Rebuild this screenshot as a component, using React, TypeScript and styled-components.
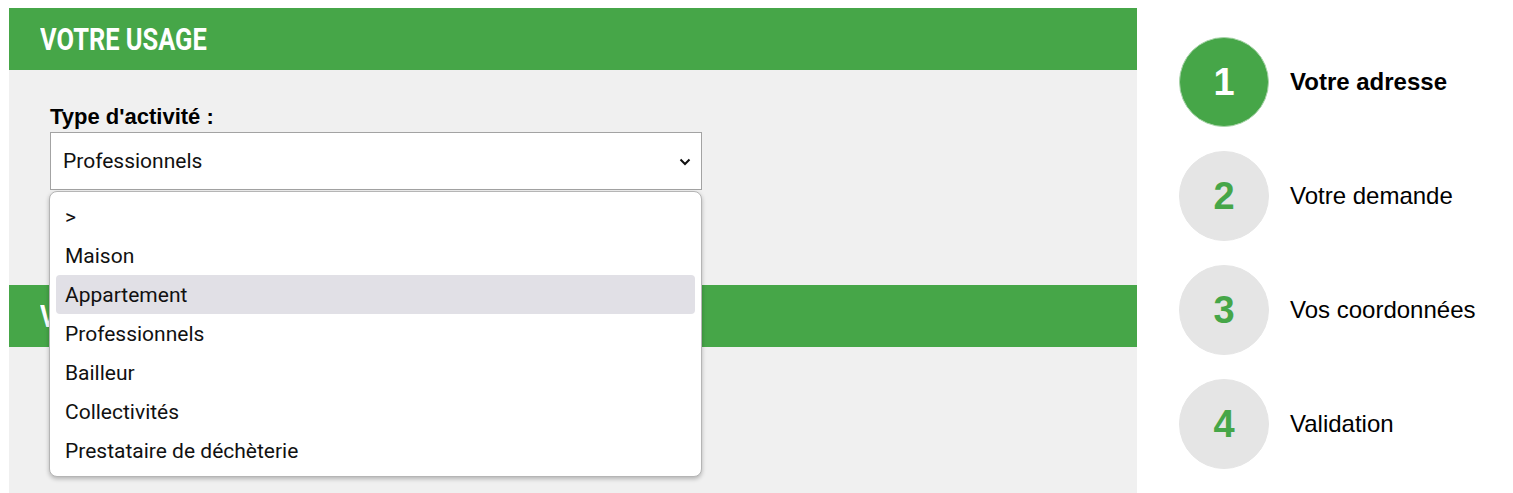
import { FC } from "react"
import styled, { createGlobalStyle } from "styled-components"

const GlobalStyle = createGlobalStyle`
  body {
    margin: 8px;
    background: #ffffff;
    font-family: Roboto, "Liberation Sans", sans-serif;
    color: #111111;
  }
`

const green = "#46a648"

const Page = styled.div`
  display: flex;
  align-items: flex-start;
  padding-left: 1px;
`

const Main = styled.div`
  width: 1128px;
  flex-shrink: 0;
  display: flex;
  flex-direction: column;
`

const SectionHeader = styled.div`
  height: 62px;
  background: ${green};
  display: flex;
  align-items: center;
  padding-left: 31px;
`

const HeaderTitle = styled.h2`
  margin: 0;
  display: inline-block;
  font-family: Roboto, "Liberation Sans", sans-serif;
  font-weight: 700;
  font-size: 31px;
  line-height: 1;
  color: #ffffff;
  transform: scaleX(0.82);
  transform-origin: left center;
  white-space: nowrap;
`

const SectionBody = styled.div<{ $height: number }>`
  background: #f0f0f0;
  height: ${({ $height }) => $height}px;
  padding: 35px 0 0 41px;
  box-sizing: border-box;
`

const Label = styled.label`
  display: block;
  font-family: "Liberation Sans", Arial, sans-serif;
  font-weight: 700;
  font-size: 22px;
  line-height: 24px;
  color: #000000;
  margin-bottom: 3px;
`

const SelectWrap = styled.div`
  position: relative;
  width: 652px;
`

const SelectBox = styled.div`
  height: 58px;
  box-sizing: border-box;
  border: 1px solid #a3a3a3;
  background: #ffffff;
  display: flex;
  align-items: center;
  justify-content: space-between;
  padding: 0 10px 0 12px;
  font-size: 21px;
  color: #111111;
`

const Chevron = styled.svg`
  width: 12px;
  height: 8px;
  margin-top: 2px;
`

const Menu = styled.ul`
  position: absolute;
  top: calc(100% + 1px);
  left: -1px;
  width: 653px;
  box-sizing: border-box;
  margin: 0;
  padding: 5px 6px 6px;
  list-style: none;
  background: #ffffff;
  border: 1px solid #b5b5b5;
  border-radius: 8px;
  box-shadow: 0 2px 4px rgba(0, 0, 0, 0.25);
  z-index: 5;
`

const MenuItem = styled.li<{ $active?: boolean }>`
  height: 39px;
  display: flex;
  align-items: center;
  padding-left: 9px;
  border-radius: 4px;
  font-size: 21px;
  color: #111111;
  background: ${({ $active }) => ($active ? "#e1e0e6" : "transparent")};
`

const Steps = styled.ol`
  list-style: none;
  margin: 29px 0 0 42px;
  padding: 0;
  display: flex;
  flex-direction: column;
  gap: 24px;
`

const Step = styled.li`
  display: flex;
  align-items: center;
  gap: 21px;
`

const StepCircle = styled.div<{ $current?: boolean }>`
  width: 90px;
  height: 90px;
  border-radius: 50%;
  box-sizing: border-box;
  display: flex;
  align-items: center;
  justify-content: center;
  background: ${({ $current }) => ($current ? green : "#e5e5e5")};
  border: 1px solid ${({ $current }) => ($current ? "#a9d4aa" : "#e5e5e5")};
  color: ${({ $current }) => ($current ? "#ffffff" : green)};
  font-family: "Liberation Sans", Arial, sans-serif;
  font-weight: 700;
  font-size: 38px;
`

const StepLabel = styled.span<{ $current?: boolean }>`
  font-family: "Liberation Sans", Arial, sans-serif;
  font-size: 24px;
  font-weight: ${({ $current }) => ($current ? 700 : 400)};
  color: #000000;
`

const options = [
  ">",
  "Maison",
  "Appartement",
  "Professionnels",
  "Bailleur",
  "Collectivités",
  "Prestataire de déchèterie",
]

const steps = ["Votre adresse", "Votre demande", "Vos coordonnées", "Validation"]

const App: FC = () => {
  return (
    <>
      <GlobalStyle />
      <Page>
        <Main>
          <SectionHeader>
            <HeaderTitle>VOTRE USAGE</HeaderTitle>
          </SectionHeader>
          <SectionBody $height={215}>
            <Label>Type d'activité :</Label>
            <SelectWrap>
              <SelectBox>
                <span>Professionnels</span>
                <Chevron viewBox="0 0 12 8">
                  <polyline
                    points="1.5,1.5 6,6 10.5,1.5"
                    fill="none"
                    stroke="#111"
                    strokeWidth="2"
                  />
                </Chevron>
              </SelectBox>
              <Menu>
                {options.map((o) => (
                  <MenuItem key={o} $active={o === "Appartement"}>
                    {o}
                  </MenuItem>
                ))}
              </Menu>
            </SelectWrap>
          </SectionBody>
          <SectionHeader>
            <HeaderTitle>VOTRE DEMANDE</HeaderTitle>
          </SectionHeader>
          <SectionBody $height={160} />
        </Main>
        <Steps>
          {steps.map((s, i) => (
            <Step key={s}>
              <StepCircle $current={i === 0}>{i + 1}</StepCircle>
              <StepLabel $current={i === 0}>{s}</StepLabel>
            </Step>
          ))}
        </Steps>
      </Page>
    </>
  )
}

export default App
